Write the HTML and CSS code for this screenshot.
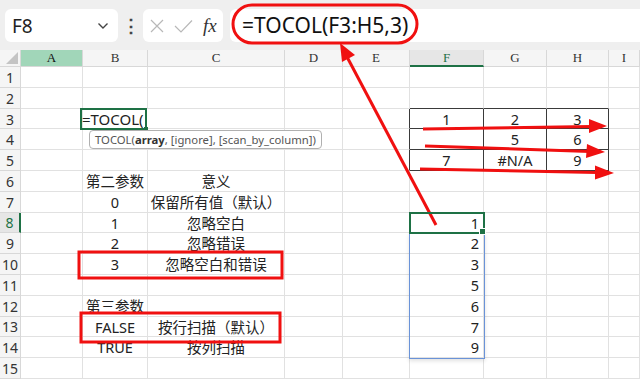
FILE: index.html
```html
<!DOCTYPE html>
<html>
<head lang="zh">
  <meta charset="UTF-8">
  <title>TOCOL</title>
  <link rel="stylesheet" href="styles.css">
</head>
<body>
  <div class="app">
    <div class="toolbar">
      <div class="namebox"><span>F8</span>
        <svg width="12" height="8" viewBox="0 0 12 8"><path d="M1.5 1.5 L6 6 L10.5 1.5" fill="none" stroke="#444" stroke-width="1.4"/></svg>
      </div>
      <div class="dots">⋮</div>
      <div class="fxbox">
        <svg width="14" height="14" viewBox="0 0 14 14"><path d="M1 1 L13 13 M13 1 L1 13" stroke="#b8b8b8" stroke-width="1.2"/></svg>
        <svg width="19" height="14" viewBox="0 0 19 14"><path d="M1 7 L7 13 L18 1.5" fill="none" stroke="#b8b8b8" stroke-width="1.2"/></svg>
        <span class="fx">fx</span>
      </div>
      <div class="formula">=TOCOL(F3:H5,3)</div>
    </div>

    <div class="sheet">
      <div class="hd corner"><svg width="12" height="12" viewBox="0 0 12 12"><path d="M12 0 L12 12 L0 12 Z" fill="#c4c4c4"/></svg></div>
      <div class="hd col act">A</div>
      <div class="hd col">B</div>
      <div class="hd col">C</div>
      <div class="hd col">D</div>
      <div class="hd col">E</div>
      <div class="hd col fsel">F</div>
      <div class="hd col">G</div>
      <div class="hd col">H</div>
      <div class="hd col">I</div>

      <div class="hd row">1</div><div class="c"></div><div class="c"></div><div class="c"></div><div class="c"></div><div class="c"></div><div class="c"></div><div class="c"></div><div class="c"></div><div class="c"></div>
      <div class="hd row">2</div><div class="c"></div><div class="c"></div><div class="c"></div><div class="c"></div><div class="c"></div><div class="c bb"></div><div class="c bb"></div><div class="c bb"></div><div class="c"></div>
      <div class="hd row">3</div><div class="c"></div><div class="c edit">=TOCOL(</div><div class="c"></div><div class="c"></div><div class="c br"></div><div class="c box ctr">1</div><div class="c box ctr">2</div><div class="c box ctr">3</div><div class="c"></div>
      <div class="hd row">4</div><div class="c"></div><div class="c tipcell"><div class="tip">TOCOL(<b>array</b>, [ignore], [scan_by_column])</div></div><div class="c"></div><div class="c"></div><div class="c br"></div><div class="c box"></div><div class="c box ctr">5</div><div class="c box ctr">6</div><div class="c"></div>
      <div class="hd row">5</div><div class="c"></div><div class="c"></div><div class="c"></div><div class="c"></div><div class="c br"></div><div class="c box ctr">7</div><div class="c box ctr">#N/A</div><div class="c box ctr">9</div><div class="c"></div>
      <div class="hd row">6</div><div class="c"></div><div class="c ctr">第二参数</div><div class="c ctr">意义</div><div class="c"></div><div class="c"></div><div class="c"></div><div class="c"></div><div class="c"></div><div class="c"></div>
      <div class="hd row">7</div><div class="c"></div><div class="c ctr">0</div><div class="c ctr">保留所有值（默认）</div><div class="c"></div><div class="c"></div><div class="c"></div><div class="c"></div><div class="c"></div><div class="c"></div>
      <div class="hd row rsel">8</div><div class="c"></div><div class="c ctr">1</div><div class="c ctr">忽略空白</div><div class="c"></div><div class="c"></div><div class="c num sel">1</div><div class="c"></div><div class="c"></div><div class="c"></div>
      <div class="hd row">9</div><div class="c"></div><div class="c ctr">2</div><div class="c ctr">忽略错误</div><div class="c"></div><div class="c"></div><div class="c num">2</div><div class="c"></div><div class="c"></div><div class="c"></div>
      <div class="hd row">10</div><div class="c"></div><div class="c ctr">3</div><div class="c ctr">忽略空白和错误</div><div class="c"></div><div class="c"></div><div class="c num">3</div><div class="c"></div><div class="c"></div><div class="c"></div>
      <div class="hd row">11</div><div class="c"></div><div class="c"></div><div class="c"></div><div class="c"></div><div class="c"></div><div class="c num">5</div><div class="c"></div><div class="c"></div><div class="c"></div>
      <div class="hd row">12</div><div class="c"></div><div class="c ctr">第三参数</div><div class="c"></div><div class="c"></div><div class="c"></div><div class="c num">6</div><div class="c"></div><div class="c"></div><div class="c"></div>
      <div class="hd row">13</div><div class="c"></div><div class="c ctr">FALSE</div><div class="c ctr">按行扫描（默认）</div><div class="c"></div><div class="c"></div><div class="c num">7</div><div class="c"></div><div class="c"></div><div class="c"></div>
      <div class="hd row">14</div><div class="c"></div><div class="c ctr">TRUE</div><div class="c ctr">按列扫描</div><div class="c"></div><div class="c"></div><div class="c num">9</div><div class="c"></div><div class="c"></div><div class="c"></div>
      <div class="hd row">15</div><div class="c"></div><div class="c"></div><div class="c"></div><div class="c"></div><div class="c"></div><div class="c"></div><div class="c"></div><div class="c"></div><div class="c"></div>

      <div class="range"></div>
    </div>

    <svg class="marks" width="640" height="379" viewBox="0 0 640 379">
      <g fill="none" stroke="#f01010" stroke-width="3">
        <rect x="233" y="5" width="184" height="38" rx="19"/>
        <rect x="79" y="252" width="203" height="26"/>
        <rect x="81" y="313" width="199" height="29"/>
        <line x1="436" y1="225" x2="346" y2="55"/>
        <line x1="423" y1="129" x2="592" y2="126.5"/>
        <line x1="425" y1="146" x2="590" y2="151.5"/>
        <line x1="420" y1="169" x2="597" y2="172.5"/>
      </g>
      <g fill="#f01010">
        <polygon points="340,43 355,55 342,62"/>
        <polygon points="607,126 589,119 589,133"/>
        <polygon points="605,152 587,144 586,158"/>
        <polygon points="614,173 595,165.5 595,179.5"/>
      </g>
    </svg>
  </div>
</body>
</html>
```

FILE: styles.css
```css
*{
  margin: 0;
  padding: 0;
  box-sizing: border-box;
}
body{
  background: #fff;
  font-family: "Noto Sans", "Noto Sans CJK SC", sans-serif;
  color: #222;
}
.app{
  width: 640px;
  height: 379px;
  position: relative;
  overflow: hidden;
}
.toolbar{
  height: 50px;
  background: #efefef;
  display: flex;
  align-items: flex-start;
  padding: 9px 0 0 5px;
}
.namebox{
  width: 113px;
  height: 33px;
  background: #fff;
  border-radius: 6px;
  display: flex;
  align-items: center;
  justify-content: space-between;
  padding: 0 9px 0 7px;
  font-size: 19px;
}
.dots{
  width: 25px;
  text-align: center;
  font-size: 18px;
  font-weight: bold;
  line-height: 33px;
  color: #444;
}
.fxbox{
  width: 80px;
  height: 33px;
  background: #fff;
  border-radius: 6px;
  display: flex;
  align-items: center;
  gap: 10px;
  padding-left: 7px;
}
.fx{
  font-family: "Liberation Serif", serif;
  font-style: italic;
  font-size: 19px;
  color: #333;
}
.formula{
  flex: 1;
  height: 33px;
  margin-left: 7px;
  background: #fff;
  border-radius: 6px 0 0 6px;
  font-size: 21px;
  line-height: 33px;
  padding-left: 12px;
  color: #111;
}
.sheet{
  position: relative;
  display: grid;
  grid-template-columns: 21px 62px 65px 137px 58px 67px 74px 63px 62px 1fr;
  grid-template-rows: 17px repeat(15, 20.8px);
}
.hd{
  background: #f5f5f5;
  border-right: 1px solid #d8d8d8;
  border-bottom: 1px solid #d8d8d8;
  color: #333;
  display: flex;
  align-items: center;
  justify-content: center;
}
.corner{
  justify-content: flex-end;
  align-items: flex-end;
  padding: 0 2px 2px 0;
}
.col{
  font-family: "Liberation Serif", serif;
  font-size: 13px;
}
.col.act{
  background: #a1d6b9;
  color: #111;
}
.col.fsel{
  border-bottom: 2px solid #1e7145;
  color: #1e7145;
  background: #e6e6e6;
}
.row{
  font-size: 14px;
  padding-top: 1px;
}
.row.rsel{
  color: #1e7145;
  border-right: 2px solid #1e7145;
  background: #e6e6e6;
}
.c{
  border-right: 1px solid #e1e1e1;
  border-bottom: 1px solid #e1e1e1;
  font-size: 14.5px;
  line-height: 20px;
  white-space: nowrap;
  position: relative;
}
.ctr{
  text-align: center;
}
.num{
  text-align: right;
  padding-right: 4px;
}
.bb{
  border-bottom-color: #3a3a3a;
}
.br{
  border-right-color: #3a3a3a;
}
.box{
  border-right-color: #3a3a3a;
  border-bottom-color: #3a3a3a;
}
.edit{
  outline: 2px solid #1e7145;
  outline-offset: -1px;
  left: -2px;
  padding-left: 1px;
  font-size: 15px;
  z-index: 2;
}
.edit::after{
  content: "";
  position: absolute;
  right: -3px;
  bottom: -3px;
  width: 4px;
  height: 4px;
  background: #1e7145;
}
.tip{
  position: absolute;
  left: 6px;
  top: 1px;
  height: 19px;
  padding: 0 5px;
  background: #fff;
  border: 1px solid #b0b0b0;
  border-radius: 4px;
  font-size: 11.3px;
  line-height: 17px;
  color: #555;
  z-index: 3;
}
.tip b{
  color: #333;
}
.sel{
  outline: 2px solid #1e7145;
  outline-offset: -1px;
  z-index: 2;
}
.sel::after{
  content: "";
  position: absolute;
  right: -3px;
  bottom: -3px;
  width: 5px;
  height: 5px;
  background: #1e7145;
  border: 1px solid #fff;
}
.range{
  position: absolute;
  left: 409px;
  top: 183px;
  width: 76px;
  height: 126px;
  border: 1px solid #6a93d8;
  border-top: none;
  box-shadow: 0 2px 4px rgba(0,0,0,0.12);
  pointer-events: none;
}
.marks{
  position: absolute;
  left: 0;
  top: 0;
  pointer-events: none;
}
```
